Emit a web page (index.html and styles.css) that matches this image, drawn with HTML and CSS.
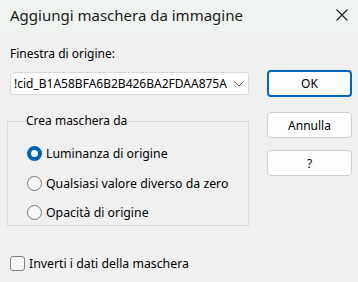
FILE: index.html
```html
<!DOCTYPE html>
<html>
<head>
<meta charset="utf-8">
<link rel="stylesheet" href="styles.css">
</head>
<body>
<div class="dialog">
  <div class="titlebar">
    <span class="title">Aggiungi maschera da immagine</span>
    <svg class="close" width="12" height="12" viewBox="0 0 12 12"><path d="M0.5 0.5 L11.5 11.5 M11.5 0.5 L0.5 11.5" stroke="#1a1a1a" stroke-width="1.1" fill="none"/></svg>
  </div>
  <div class="content">
    <div class="left">
      <div class="label">Finestra di origine:</div>
      <div class="combo">
        <span class="combo-text">!cid_B1A58BFA6B2B426BA2FDAA875A</span>
        <svg class="chev" width="10" height="6" viewBox="0 0 10 6"><path d="M0.5 0.5 L5 5 L9.5 0.5" stroke="#5f5f5f" stroke-width="1" fill="none"/></svg>
      </div>
      <fieldset class="group">
        <legend>Crea maschera da</legend>
        <div class="radio-row"><span class="radio checked"></span><span>Luminanza di origine</span></div>
        <div class="radio-row"><span class="radio"></span><span>Qualsiasi valore diverso da zero</span></div>
        <div class="radio-row"><span class="radio"></span><span>Opacità di origine</span></div>
      </fieldset>
      <div class="check-row"><span class="checkbox"></span><span>Inverti i dati della maschera</span></div>
    </div>
    <div class="right">
      <button class="btn primary">OK</button>
      <button class="btn second">Annulla</button>
      <button class="btn third">?</button>
    </div>
  </div>
</div>
</body>
</html>
```
FILE: styles.css
```css
html, body {
  margin: 0;
  padding: 0;
}
body {
  width: 358px;
  height: 282px;
  background: #f0f0f0;
  font-family: "Noto Sans", "Open Sans", sans-serif;
  font-size: 12px;
  color: #000;
  overflow: hidden;
}
.dialog {
  width: 358px;
  height: 282px;
  display: flex;
  flex-direction: column;
}
.titlebar {
  height: 33px;
  background: #eff4f1;
  display: flex;
  align-items: center;
  justify-content: space-between;
  padding: 0 9px 0 10px;
  box-sizing: border-box;
}
.title {
  font-size: 15px;
  color: #1a1a1a;
  position: relative;
  top: -2px;
}
.close {
  margin-right: 1px;
  position: relative;
  top: -2px;
}
.content {
  display: flex;
  padding: 0 6px 0 8px;
}
.left {
  width: 241px;
  display: flex;
  flex-direction: column;
}
.label {
  margin: 13px 0 0 2px;
  line-height: 16px;
  height: 16px;
}
.combo {
  margin: 10px 0 0 2px;
  height: 23px;
  background: #fff;
  border: 1px solid #d9d9d9;
  border-radius: 3px;
  box-sizing: border-box;
  display: flex;
  align-items: center;
  justify-content: space-between;
  padding: 0 4px 0 3px;
}
.combo-text {
  font-size: 12px;
}
.group {
  margin: 19px 0 0 -1px;
  padding: 11px 0 10px 19px;
  border: 1px solid #dcdcdc;
  height: 112px;
  box-sizing: border-box;
  min-width: 0;
}
.group legend {
  padding: 0 1px;
  margin-left: -2px;
  line-height: 14px;
}
.radio-row {
  display: flex;
  align-items: center;
  height: 29.5px;
  gap: 4px;
  font-size: 12.3px;
}
.radio {
  width: 15px;
  height: 15px;
  border-radius: 50%;
  border: 1px solid #7a7a7a;
  box-sizing: border-box;
  background: #f7f7f7;
  flex: none;
}
.radio.checked {
  border: 4px solid #0062b5;
  background: #fff;
}
.check-row {
  display: flex;
  align-items: center;
  margin: 29px 0 0 2px;
  gap: 4px;
  font-size: 12.3px;
}
.checkbox {
  width: 15px;
  height: 15px;
  border: 1px solid #808080;
  border-radius: 3px;
  box-sizing: border-box;
  background: #f7f7f7;
  flex: none;
}
.right {
  margin-left: 18px;
  display: flex;
  flex-direction: column;
  padding-top: 37px;
}
.btn {
  width: 85px;
  height: 26px;
  background: #fdfdfd;
  border: 1px solid #d0d0d0;
  border-radius: 4px;
  font-family: inherit;
  font-size: 12px;
  color: #000;
  padding: 0;
}
.btn.primary {
  height: 27px;
  border: 2px solid #0067c0;
}
.btn.second {
  margin-top: 15px;
}
.btn.third {
  margin-top: 12px;
}
```
